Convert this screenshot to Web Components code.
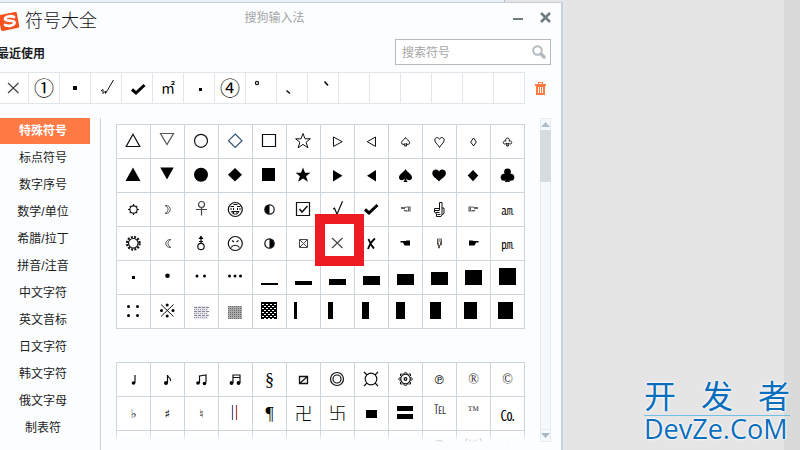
<!DOCTYPE html>
<html lang="zh-CN">
<head>
<meta charset="utf-8">
<title>符号大全</title>
<style>
  body {
    margin: 0;
    height: 100vh;
    overflow: hidden;
    background: #e5e5e5;
    font: 12px/18px "Liberation Sans", "Noto Sans CJK SC", sans-serif;
    color: #1c1c1c;
    --line: #cdd5dc;
    --accent: #ff7a45;
  }
</style>
</head>
<body>
<sym-desktop>
  <sym-window slot="window" heading="符号大全" product="搜狗输入法">
    <sym-recent slot="recent" items="× ① ▪ 𝆗 ✔ ㎡ · ④ ° 、 ˋ" slots="17"></sym-recent>
    <sym-nav slot="nav" items="特殊符号 标点符号 数字序号 数学/单位 希腊/拉丁 拼音/注音 中文字符 英文音标 日文字符 韩文字符 俄文字母 制表符"></sym-nav>
    <sym-grid marked="×" items="△ ▽ ○ ◇ □ ☆ ▷ ◁ ♤ ♡ ♢ ♧ ▲ ▼ ● ◆ ■ ★ ▶ ◀ ♠ ♥ ♦ ♣ ☼ ☽ ♀ ☻ ◐ ☑ √ ✔ ☜ ☝ ☞ ㏂ ☀ ☾ ♁ ☹ ◑ ☒ × ✗ ☚ ☟ ☛ ㏘ · • ‥ … ▁ ▂ ▃ ▄ ▅ ▆ ▇ █ ∷ ※ ░ ▒ ▓ ▏ ▎ ▍ ▌ ▋ ▊ ▉"></sym-grid>
    <sym-grid items="♩ ♪ ♫ ♬ § ⧄ ◎ ¤ ۞ ℗ ® © ♭ ♯ ♮ ‖ ¶ 卍 卐 ▬ 〓 ℡ ™ ㏇ - - - - - - - - - ⊙ ㈱ №"></sym-grid>
  </sym-window>
  <sym-watermark slot="mark" top="开发者" bottom="DevZe.CoM"></sym-watermark>
</sym-desktop>

<script>
// drawings on a 33x33 cell, keyed by the character they stand for
const star = 'M16 8.5l2 5.3h5.4l-4.3 3.4 1.8 5.6-4.9-3.4-4.9 3.4 1.8-5.6-4.3-3.4H14z'
const spade = 'M16.5 10C15.5 13 10 15 10 18.4c0 3.2 4.2 3.6 5.8 1.2-.1 1.5-.6 2.6-1.6 3.4h4.6c-1-.8-1.5-1.9-1.6-3.4 1.6 2.4 5.8 2 5.8-1.2C23 15 17.5 13 16.5 10z'
const smallSpade = 'M16.5 12.5c-.5 2-4 3-4 5.2 0 2 2.8 2.2 3.6.8l-.6 2.5h2.2l-.6-2.5c.8 1.4 3.6 1.2 3.6-.8 0-2.2-3.6-3.2-4.2-5.2z'
const dots = pts => pts.map(p => `<circle class="f" cx="${p[0]}" cy="${p[1]}" r="1.5"/>`).join('')
const bar = (x, y, w, h) => `<rect class="f" x="${x}" y="${y}" width="${w}" height="${h}"/>`
const half = d => `<circle cx="16.5" cy="16.5" r="4.7"/><path class="f" d="${d}"/>`
const shade = (x, y, sx, sy, w) => {
  let d = ''
  for (let j = y; j < 24; j += sy)
    for (let i = x; i < 23; i += sx) d += `M${i} ${j + .5}h${w}`
  return `<path stroke-width="1" d="${d}"/>`
}

const shapes = {
  '△': '<path d="M16 9.3L22.8 21.5H9.2z"/>',
  '▽': '<path stroke="#555" d="M16 19.5L9.5 8.5h13z"/>',
  '○': '<circle cx="16" cy="15.8" r="6.5"/>',
  '◇': '<path stroke="#357" d="M16.2 9l6.7 6.7-6.7 6.7-6.7-6.7z"/>',
  '□': '<path d="M9.5 9.5h13v12h-13z"/>',
  '☆': `<path stroke-width="1" d="${star}"/>`,
  '▷': '<path stroke-width="1" d="M12.5 12v9.4l8.7-4.7z"/>',
  '◁': '<path stroke-width="1" d="M20.5 12v9.4l-8.3-4.7z"/>',
  '♤': `<path stroke-width="1" d="${smallSpade}"/>`,
  '♡': '<path stroke-width="1" d="M16.5 22.5c-1-2.6-4.7-4.5-4.7-7.4 0-3 3.7-3.4 4.7-.7 1-2.7 4.7-2.3 4.7.7 0 2.9-3.7 4.8-4.7 7.4z"/>',
  '♢': '<path stroke-width="1" d="M16.5 13l2.8 4-2.8 4-2.8-4z"/>',
  '♧': '<path stroke-width="1" d="M15 16c-2-3.8 5-3.8 3 0 3.6-.8 3.6 4 .3 2.8L17 18l.4 3h-1.800l.4-3-1.300.8c-3.300 1.200-3.300-3.600.3-2.800z"/>',
  '▲': '<path class="f" d="M16 8.500L23.500 22h-15z"/>',
  '▼': '<path class="f" d="M16 20.500L9.300 8.500h13.400z"/>',
  '●': '<circle class="f" cx="16" cy="15.800" r="7"/>',
  '◆': '<path class="f" d="M16 9l7 6.800-7 6.800-7-6.800z"/>',
  '■': bar(9, 9, 13, 13),
  '★': `<path class="f" d="${star}"/>`,
  '▶': '<path class="f" d="M12 11v11.500l9.500-5.700z"/>',
  '◀': '<path class="f" d="M21 11v11.500l-9-5.700z"/>',
  '♠': `<path class="f" d="${spade}"/>`,
  '♥': '<path class="f" d="M16 22.500c-2-3-6.700-4.500-6.700-8.300C9.300 10 15 9.500 16 12.700c1-3.200 6.900-2.700 6.900 1.500 0 3.800-4.900 5.300-6.900 8.300z"/>',
  '♦': '<path class="f" d="M16 11l5.300 5.600-5.300 5.700-5.300-5.700z"/>',
  '♣': '<circle class="f" cx="16.500" cy="13" r="3.400"/><circle class="f" cx="13.200" cy="18.200" r="3.500"/><circle class="f" cx="19.800" cy="18.200" r="3.500"/><path class="f" d="M15.500 14h2l.3 6 1.200 3h-5l1.200-3z"/>',
  '☼': '<circle cx="16.500" cy="16.500" r="3.700"/><path d="M16.500 11v2M16.500 20v2M11 16.500h2M20 16.500h2M12.800 12.800l1 1M19.200 19.200l1 1M12.800 20.200l1-1M19.200 13.800l1-1"/>',
  '☽': '<path stroke="#555" stroke-width="1" d="M14 12.500c7-.5 7 8.500 0 8 4-1.500 4-6.500 0-8z"/>',
  '♀': '<circle stroke="#444" cx="16.500" cy="11.500" r="3"/><path stroke="#444" d="M16.500 14.500v8M11 16.500h11"/>',
  '☻': '<circle cx="16.300" cy="16.500" r="7"/><path stroke-width="1" d="M11.500 13.500h3.500M18 13.500h3.500M12 15v2M14.500 15v2M18.500 15v2M21 15v2M12.500 18.500c1 3.500 6.500 3.500 7.500 0zM14.500 11.500h4M14.500 18.500v2.500M18 18.500v2.500"/>',
  '◐': half('M16.500 12v9a4.500 4.500 0 0 1 0-9z'),
  '◑': half('M16.500 12v9a4.500 4.500 0 0 0 0-9z'),
  '☑': '<path d="M9.500 9.500h13v13h-13z"/><path stroke-width="1.500" d="M12.500 16l2.500 3 5.500-6"/>',
  '√': '<path d="M12 16l1.500-.8 2.500 6 5.500-13"/>',
  '✔': '<path stroke="#000" stroke-width="3" d="M10 16.500l4 3.500 8.500-8"/>',
  '☜': '<path stroke="#666" d="M12 14.500h4l1.500-.500h3.500v4h-5l-1-1M12 15.500h4M15 17.500h3M19.500 14v4"/>',
  '☞': '<path stroke="#666" d="M21 14.500h-4l-1.500-.500H12v4h5l1-1M21 15.500h-4M18 17.500h-3M13.500 14v4"/>',
  '☚': '<path class="f" d="M11.500 14h5l1-.500h3.500v5h-5.500l-1.500-3h-2.500z"/>',
  '☛': '<path class="f" d="M21.500 14h-5l-1-.500H12v5h5.500l1.500-3h2.500z"/>',
  '☝': '<path stroke-width="1" d="M16.500 17V9.500h2.500V22l-1 1.500h-4.500V21l-2-2v-3.500h5M19 15h2v5l-1.500 2M12 17.500h4.500M12.500 19.500h4M14.500 21.500h3"/>',
  '☟': '<path stroke="#655" stroke-width="1" d="M14.500 12h4v6h-2v3h-1v-3h-1zM14 14h4M15.500 15.500v2M17.500 15v3"/>',
  '☀': '<circle cx="16.300" cy="16.300" r="6.300" stroke-width="2.200" stroke-dasharray="2 1.300"/><circle cx="16.300" cy="16.300" r="4.800"/>',
  '☾': '<path stroke="#555" stroke-width="1" d="M20 12.500c-7-.5-7 8.500 0 8-4-1.500-4-6.500 0-8z"/>',
  '♁': '<circle cx="16" cy="19.500" r="3.200"/><path d="M16 16v-6M14 14.500h4"/><path class="f" d="M16 8.500l2.500 3.500h-5z"/>',
  '☹': '<circle cx="16.300" cy="16.500" r="7"/><path d="M12 20.500c2-3 6.500-3 8.500 0M13 13.500l2 1.500M19.500 13.500l-2 1.500"/>',
  '☒': '<path stroke="#444" stroke-width="1" d="M12.500 12.500h8v8h-8zM13 13l7 7M20 13l-7 7"/>',
  '×': '<path stroke="#444" d="M11 11l10.500 10M21.500 11L11 21"/>',
  '✗': '<path stroke="#000" stroke-width="1.800" d="M13.500 12c1 3 2.500 6.500 5.500 9.500M20 11.500c-3 2.500-5 5-7 10.500"/>',
  '·': bar(15, 15, 3, 3),
  '•': '<circle class="f" cx="16.500" cy="14.800" r="2.300"/>',
  '‥': dots([[12, 15], [19.500, 15]]),
  '…': dots([[10.500, 15], [16, 15], [21.500, 15]]),
  '∷': dots([[11.500, 11.500], [20.500, 11.500], [11.500, 20.500], [20.500, 20.500]]),
  '※': '<path stroke-width="1" d="M10 9.500l12.500 12M22.500 9.500L10 21.500"/>' + dots([[16.200, 10], [10.500, 15.500], [22, 15.500], [16.200, 21]]),
  '░': `<rect x="9" y="11" width="14" height="13" fill="#e4e4ea" stroke="none"/><g stroke="#9a9aa4">${shade(9, 12, 2, 2, 1)}</g><g stroke="#88889a">${shade(9, 12, 4, 4, 3)}</g>`,
  '▒': `<rect x="9" y="11" width="14" height="13" fill="#aaa" stroke="none"/><g stroke="#6c6c6c">${shade(9, 11, 2, 2, 1)}</g>`,
  '▓': bar(8, 7, 16, 17) + `<g stroke="#fff">${shade(9, 9, 4, 4, 2)}${shade(11, 11, 4, 4, 2)}</g>`,
  '♩': '<path d="M18 12v8"/><circle class="f" cx="16.500" cy="20" r="1.800"/>',
  '♪': '<path d="M16.500 20v-8c0 3 4 2.500 3 6"/><circle class="f" cx="15" cy="20" r="2"/>',
  '♫': '<path d="M14.500 20v-7l6.500-1v7.500"/><circle class="f" cx="13" cy="20" r="1.800"/><circle class="f" cx="19.500" cy="20.500" r="1.800"/>',
  '♬': '<path d="M14 20v-8h7v8M14 14.500h7"/><circle class="f" cx="12.500" cy="20" r="1.900"/><circle class="f" cx="19.500" cy="20" r="1.900"/>',
  '⧄': '<path stroke-width="1.300" d="M12.500 13.500h8v7h-8zM12.500 20.500l8-7"/>',
  '◎': '<circle cx="16" cy="16" r="6.500"/><circle cx="16" cy="16" r="4"/>',
  '¤': '<circle cx="16" cy="16" r="5.800"/><path d="M9 9l3 3M23 9l-3 3M9 23l3-3M23 23l-3-3"/>',
  '۞': '<circle cx="16.500" cy="16" r="4.800"/><circle cx="16.500" cy="16" r="1.300"/><path stroke-width="1" d="M14.500 11l2-2 2 2M14.500 21l2 2 2-2M11.500 14l-2 2 2 2M21.500 14l2 2-2 2M11.500 13v-2h2M19.500 11h2v2M11.500 19v2h2M19.500 21h2v-2"/>',
  '‖': '<path stroke="#558" d="M13.500 8v15"/><path stroke="#a44" d="M17.500 8v15"/>',
  '▬': bar(11, 13, 11, 8),
  '〓': bar(8, 9, 16, 5) + bar(8, 17, 16, 5),
  '▪': bar(13, 13, 4, 4),
  '𝆗': '<path stroke-width="1" d="M10 18l2-1.500v4l2.500-2.500v2.500l8-13.500"/>',
  '°': '<circle cx="11" cy="10" r="1.600"/>',
  '、': '<path stroke-width="1.600" d="M9.500 17.500l3.500 3"/>',
  'ˋ': '<path stroke-width="1.600" d="M16.500 8.500l3.500 4"/>'
}
;[2, 4, 6, 9, 11, 13, 15, 17].forEach((h, i) => {
  shapes['▁▂▃▄▅▆▇█'[i]] = bar(8, 24 - h, 17, h)
})
;[3, 5, 7, 9, 11, 13, 15].forEach((w, i) => {
  shapes['▏▎▍▌▋▊▉'[i]] = bar(7, 7, w, 17)
})

const symbolCss = `
  button {
    box-sizing: border-box;
    display: flex;
    align-items: center;
    justify-content: center;
    min-width: 0;
    padding: 0;
    border: 0 solid var(--line);
    border-width: 0 1px 1px 0;
    background: #fff;
    color: #000;
    font: 14px/20px "Noto Sans CJK SC", sans-serif;
    overflow: visible;
  }
  button.small { font-size: 12px; }
  button.unit { padding-bottom: 3px; }
  button.sign { font: 12px/20px "DejaVu Sans", sans-serif; }
  button.raised { font: 12px/20px "Liberation Serif", serif; padding-bottom: 8px; color: #444; }
  button.mark { font: 14px/20px "Liberation Serif", serif; color: #333; }
  button.serif { font: 18px/20px "Liberation Serif", serif; }
  button.large { font-size: 20px; }
  button.thin { font-size: 18px; font-weight: 300; padding-bottom: 3px; }
  svg {
    flex: none;
    width: 33px;
    height: 33px;
    fill: none;
    stroke: #111;
    stroke-width: 1.2;
  }
  .f { fill: #000; stroke: none; }
`
const sizes = {
  '①': 'large', '④': 'large', '§': 'serif', '¶': 'serif', '卍': 'thin', '卐': 'thin',
  '®': 'mark', '©': 'mark', '℗': 'sign', '♭': 'sign', '♯': 'sign', '♮': 'sign',
  '™': 'raised', '℡': 'raised', '㏂': 'small', '㏘': 'small', '㎡': 'unit',
  '⊙': 'large', '㈱': 'large', '№': 'large'
}

function symbolButton(ch) {
  if (ch === '-') return '<button type="button"></button>'
  const body = shapes[ch] ? `<svg viewBox="0 0 33 33" aria-hidden="true">${shapes[ch]}</svg>` : ch
  return `<button type="button" class="${sizes[ch] || ''}" aria-label="${ch}">${body}</button>`
}

customElements.define('sym-desktop', class extends HTMLElement {
  constructor() {
    super()
    this.attachShadow({ mode: 'open' }).innerHTML = `
      <style>
        :host {
          display: grid;
          grid-template-columns: minmax(0, 563fr) minmax(0, 221fr) minmax(0, 16fr);
          height: 100%;
          position: relative;
        }
        .main { display: flex; flex-direction: column; min-height: 0; }
        .tab { height: 2px; margin-right: 58px; background: #eaf1f8; border-right: 1px solid #b4bcc4; }
        .edge { background: #dadada; }
      </style>
      <div class="main"><div class="tab"></div><slot name="window"></slot></div>
      <div></div>
      <div class="edge"></div>
      <slot name="mark"></slot>
    `
  }
})

customElements.define('sym-window', class extends HTMLElement {
  constructor() {
    super()
    this.attachShadow({ mode: 'open' }).innerHTML = `
      <style>
        :host {
          display: flex;
          flex-direction: column;
          flex: 1;
          min-height: 0;
          background: #fbfdff;
          border: 0 solid #c3d3e2;
          border-width: 1px 2px 0 0;
        }
        header {
          display: grid;
          grid-template-columns: 1fr auto 1fr;
          height: 36px;
          padding-right: 12px;
        }
        .brand { display: flex; align-items: center; gap: 5px; }
        h1 { margin: 0; font-size: 18px; line-height: 34px; font-weight: 300; color: #111; }
        .product { line-height: 30px; color: #a5a5a5; }
        .ctl { display: flex; justify-content: flex-end; align-items: center; gap: 16px; height: 28px; margin-right: -2px; }
        button { padding: 0; border: 0; background: none; display: flex; }
        svg { display: block; }
        .bar { display: flex; justify-content: space-between; align-items: center; padding-right: 10px; margin-bottom: 7px; }
        h2 { margin: 0 0 0 -3px; padding-top: 4px; font-size: 12px; line-height: 18px; font-weight: 700; }
        form {
          box-sizing: border-box;
          display: flex;
          align-items: center;
          width: 156px;
          height: 26px;
          padding: 0 4px 0 6px;
          border: 1px solid #b4bbc2;
          background: #fff;
        }
        input { flex: 1; min-width: 0; padding: 2px 0 0; border: 0; outline: 0; background: none; font: inherit; }
        input::placeholder { color: #a5a5a5; opacity: 1; }
        .body { display: flex; flex: 1; min-height: 0; margin-top: 14px; }
        .nav { flex: none; width: 100px; border-right: 1px solid var(--line); }
        .pane {
          position: relative;
          flex: 1;
          min-width: 0;
          margin-bottom: 8px;
          padding: 6px 15px 0;
          overflow: hidden;
          display: flex;
          flex-direction: column;
          gap: 33px;
        }
        .pane::after {
          content: "";
          position: absolute;
          inset: auto 0 0;
          height: 10px;
          background: linear-gradient(#fbfdff00, #fbfdff);
        }
        .scroll {
          box-sizing: border-box;
          display: flex;
          flex-direction: column;
          width: 11px;
          margin: 0 10px 8px 0;
          border: 1px solid #e6edf2;
          background: #f6f9fc;
        }
        .scroll button { height: 11px; align-items: center; justify-content: center; }
        .thumb { height: 52px; background: #d5dbdf; margin: 0 -1px; }
        .track { flex: 1; border-bottom: 1px solid #e6edf2; }
      </style>
      <header>
        <div class="brand">
          <svg width="20" height="24" viewBox="0 0 20 24" aria-hidden="true">
            <path fill="#f4511e" d="M0 6L15 3q1.500-.3 1.800 1l2.400 13q.3 1.500-1 1.800L3 22q-1.500.2-2-1l-2-10z"/>
            <path fill="none" stroke="#fff" stroke-width="2.800" stroke-linecap="round" d="M14 8c-3-1.500-9-.5-9 2 0 2.600 9.500.5 9.500 3.600 0 2.800-6 4.200-9.500 2.400"/>
          </svg>
          <h1></h1>
        </div>
        <div class="product"></div>
        <div class="ctl">
          <button type="button" aria-label="最小化"><svg width="11" height="11"><path fill="#6f7980" d="M0 6h10v2H0z"/></svg></button>
          <button type="button" aria-label="关闭"><svg width="11" height="11"><path stroke="#6f7980" stroke-width="2.500" d="M1 1l9 9M10 1l-9 9"/></svg></button>
        </div>
      </header>
      <div class="bar">
        <h2>最近使用</h2>
        <form>
          <input type="text" placeholder="搜索符号" aria-label="搜索符号">
          <button type="button" aria-label="搜索">
            <svg width="14" height="14" fill="none" stroke="#b3babf"><circle cx="5.500" cy="5.500" r="4.300" stroke-width="2"/><path stroke-width="3.500" stroke-linecap="round" d="M9.500 9.500l2.500 2.500"/></svg>
          </button>
        </form>
      </div>
      <slot name="recent"></slot>
      <div class="body">
        <div class="nav"><slot name="nav"></slot></div>
        <div class="pane"><slot></slot></div>
        <div class="scroll">
          <button type="button" aria-label="向上"><svg width="9" height="5"><path fill="#b0bcc8" d="M0 5l4.500-5L9 5z"/></svg></button>
          <div class="thumb"></div>
          <div class="track"></div>
          <button type="button" aria-label="向下"><svg width="9" height="5"><path fill="#a9b8c4" d="M0 0l4.500 5L9 0z"/></svg></button>
        </div>
      </div>
    `
  }
  connectedCallback() {
    this.shadowRoot.querySelector('h1').textContent = this.getAttribute('heading')
    this.shadowRoot.querySelector('.product').textContent = this.getAttribute('product')
  }
})

customElements.define('sym-recent', class extends HTMLElement {
  constructor() {
    super()
    this.attachShadow({ mode: 'open' })
  }
  connectedCallback() {
    const items = this.getAttribute('items').split(' ')
    while (items.length < Number(this.getAttribute('slots'))) items.push('-')
    this.shadowRoot.innerHTML = `
      <style>
        ${symbolCss}
        :host { display: flex; --line: #e2e5e9; }
        .row {
          flex: 1;
          display: grid;
          grid-template-columns: repeat(17, minmax(0, 1fr));
          margin-left: -3px;
          border: 0 solid var(--line);
          border-width: 1px 0 0 1px;
        }
        .row button { height: 31px; overflow: hidden; }
        .row button:first-child { padding: 0 3px 3px 0; }
        .row svg { width: 30px; height: 30px; }
        .clear { width: 36px; padding-right: 5px; border: 0; background: none; }
        .clear svg { width: 11px; height: 13px; stroke: none; }
      </style>
      <div class="row">${items.map(symbolButton).join('').replaceAll('0 0 33 33', '0 0 30 30')}</div>
      <button type="button" class="clear" aria-label="清空">
        <svg viewBox="0 0 11 13"><path fill="#ff7a45" fill-rule="evenodd" d="M3 0h5v2h3v2h-1v9H1V4H0V2h3zM4 1v1h3V1zM3 5v6h1V5zM5 5v6h1V5zM7 5v6h1V5z"/></svg>
      </button>
    `
  }
})

customElements.define('sym-nav', class extends HTMLElement {
  constructor() {
    super()
    this.attachShadow({ mode: 'open' })
  }
  connectedCallback() {
    const items = this.getAttribute('items').split(' ')
    this.shadowRoot.innerHTML = `
      <style>
        :host { display: block; }
        nav { display: flex; flex-direction: column; gap: 1px; margin-right: 10px; }
        button {
          height: 26px;
          padding: 0 4px 0 0;
          border: 0;
          background: none;
          color: inherit;
          font: inherit;
        }
        .on { background: var(--accent); color: #fff; font-weight: 700; }
      </style>
      <nav>${items.map((t, i) => `<button type="button"${i ? '' : ' class="on"'}>${t}</button>`).join('')}</nav>
    `
  }
})

customElements.define('sym-grid', class extends HTMLElement {
  constructor() {
    super()
    this.attachShadow({ mode: 'open' })
  }
  connectedCallback() {
    this.shadowRoot.innerHTML = `
      <style>
        ${symbolCss}
        :host {
          display: grid;
          grid-template-columns: repeat(12, minmax(0, 1fr));
          grid-auto-rows: 34px;
          flex: none;
          border: 0 solid var(--line);
          border-width: 1px 0 0 1px;
        }
        /* the frame runs past the cell on every side */
        .marked { position: relative; z-index: 1; }
        .marked::before {
          content: "";
          position: absolute;
          inset: -13px -10px -6px -6px;
          border: 10px solid #ed1c24;
          background: #fff;
        }
        .marked svg { position: relative; }
      </style>
      ${this.getAttribute('items').split(' ').map(symbolButton).join('')}
    `
    const mark = this.getAttribute('marked')
    if (mark) this.shadowRoot.querySelector(`[aria-label="${mark}"]`).classList.add('marked')
  }
})

customElements.define('sym-watermark', class extends HTMLElement {
  constructor() {
    super()
    this.attachShadow({ mode: 'open' })
  }
  connectedCallback() {
    this.shadowRoot.innerHTML = `
      <style>
        :host {
          position: absolute;
          right: 10px;
          bottom: 9px;
          width: 146px;
          color: #0a6ebd;
          text-shadow: 0 0 2px #fff, 0 0 2px #fff, 0 0 3px #fff;
        }
        .top {
          display: flex;
          justify-content: space-between;
          font: 32px/30px "Liberation Sans", "Noto Sans CJK SC", sans-serif;
          padding-bottom: 3px;
          border-bottom: 1px solid #6fc0e4;
        }
        .bottom { font: 27px/25px "Open Sans", sans-serif; white-space: nowrap; }
      </style>
      <div class="top">${[...this.getAttribute('top')].map(c => `<span>${c}</span>`).join('')}</div>
      <div class="bottom">${this.getAttribute('bottom')}</div>
    `
  }
})
</script>
</body>
</html>
